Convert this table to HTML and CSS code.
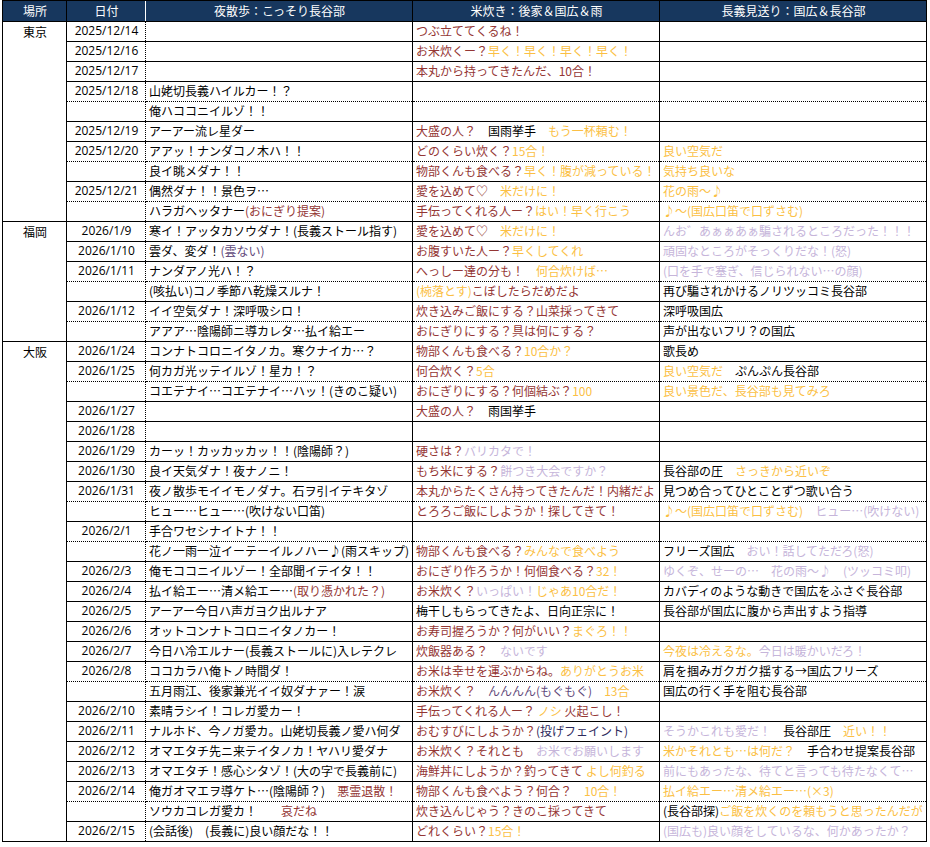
FILE: index.html
```html
<!DOCTYPE html>
<html lang="ja">
<head>
<meta charset="utf-8">
<title>夜散歩</title>
<link rel="stylesheet" href="styles.css">
</head>
<body>
<table class="sheet">
<colgroup><col class="w1"><col class="w2"><col class="w3"><col class="w4"><col class="w5"></colgroup>
<thead>
<tr class="hd"><th class="c1">場所</th><th class="c2">日付</th><th class="c3">夜散歩：こっそり長谷部</th><th class="c4">米炊き：後家＆国広＆雨</th><th class="c5">長義見送り：国広＆長谷部</th></tr>
</thead>
<tbody>
<tr><td class="c1" rowspan="10">東京</td><td class="c2">2025/12/14</td><td class="c3"></td><td class="c4"><span class="m">つぶ立ててくるね！</span></td><td class="c5"></td></tr>
<tr><td class="c2">2025/12/16</td><td class="c3"></td><td class="c4"><span class="m">お米炊くー？</span><span class="y">早く！早く！早く！早く！</span></td><td class="c5"></td></tr>
<tr><td class="c2">2025/12/17</td><td class="c3"></td><td class="c4"><span class="m">本丸から持ってきたんだ、10合！</span></td><td class="c5"></td></tr>
<tr class="dt"><td class="c2">2025/12/18</td><td class="c3">山姥切長義ハイルカー！？</td><td class="c4"></td><td class="c5"></td></tr>
<tr class="dc"><td class="c2"></td><td class="c3">俺ハココニイルゾ！！</td><td class="c4"></td><td class="c5"></td></tr>
<tr><td class="c2">2025/12/19</td><td class="c3">アーアー流レ星ダー</td><td class="c4"><span class="m">大盛の人？</span>　国雨挙手　<span class="y">もう一杯頼む！</span></td><td class="c5"></td></tr>
<tr class="dt"><td class="c2">2025/12/20</td><td class="c3">アアッ！ナンダコノ木ハ！！</td><td class="c4"><span class="m">どのくらい炊く？</span><span class="y">15合！</span></td><td class="c5"><span class="y">良い空気だ</span></td></tr>
<tr class="dc"><td class="c2"></td><td class="c3">良イ眺メダナ！！</td><td class="c4"><span class="m">物部くんも食べる？</span><span class="y">早く！腹が減っている！</span></td><td class="c5"><span class="y">気持ち良いな</span></td></tr>
<tr class="dt"><td class="c2">2025/12/21</td><td class="c3">偶然ダナ！！景色ヲ…</td><td class="c4"><span class="m">愛を込めて♡</span>　<span class="y">米だけに！</span></td><td class="c5"><span class="y">花の雨〜♪</span></td></tr>
<tr class="dc"><td class="c2"></td><td class="c3">ハラガヘッタナー<span class="m">(おにぎり提案)</span></td><td class="c4"><span class="m">手伝ってくれる人ー？</span><span class="y">はい！早く行こう</span></td><td class="c5"><span class="y">♪〜(国広口笛で口ずさむ)</span></td></tr>

<tr><td class="c1" rowspan="6">福岡</td><td class="c2">2026/1/9</td><td class="c3">寒イ！アッタカソウダナ！(長義ストール指す)</td><td class="c4"><span class="m">愛を込めて♡</span>　<span class="y">米だけに！</span></td><td class="c5"><span class="p">んお゛あぁぁあぁ騙されるところだった！！！</span></td></tr>
<tr><td class="c2">2026/1/10</td><td class="c3">雲ダ、変ダ！<span class="dp">(雲ない)</span></td><td class="c4"><span class="m">お腹すいた人ー？</span><span class="y">早くしてくれ</span></td><td class="c5"><span class="p">頑固なところがそっくりだな！(怒)</span></td></tr>
<tr class="dt"><td class="c2">2026/1/11</td><td class="c3">ナンダアノ光ハ！？</td><td class="c4"><span class="m">へっしー達の分も！</span>　<span class="y">何合炊けば…</span></td><td class="c5"><span class="p">(口を手で塞ぎ、信じられない…の顔)</span></td></tr>
<tr class="dc"><td class="c2"></td><td class="c3">(咳払い)コノ季節ハ乾燥スルナ！</td><td class="c4"><span class="y">(椀落とす)</span><span class="m">こぼしたらだめだよ</span></td><td class="c5">再び騙されかけるノリツッコミ長谷部</td></tr>
<tr class="dt"><td class="c2">2026/1/12</td><td class="c3">イイ空気ダナ！深呼吸シロ！</td><td class="c4"><span class="m">炊き込みご飯にする？山菜採ってきて</span></td><td class="c5">深呼吸国広</td></tr>
<tr class="dc"><td class="c2"></td><td class="c3">アアア…陰陽師ニ導カレタ…払イ給エー</td><td class="c4"><span class="m">おにぎりにする？具は何にする？</span></td><td class="c5">声が出ないフリ？の国広</td></tr>

<tr><td class="c1" rowspan="25">大阪</td><td class="c2">2026/1/24</td><td class="c3">コンナトコロニイタノカ。寒クナイカ…？</td><td class="c4"><span class="m">物部くんも食べる？</span><span class="y">10合か？</span></td><td class="c5">歌長め</td></tr>
<tr class="dt"><td class="c2">2026/1/25</td><td class="c3">何カガ光ッテイルゾ！星カ！？</td><td class="c4"><span class="m">何合炊く？</span><span class="y">5合</span></td><td class="c5"><span class="y">良い空気だ</span>　ぷんぷん長谷部</td></tr>
<tr class="dc"><td class="c2"></td><td class="c3">コエテナイ…コエテナイ…ハッ！(きのこ疑い)</td><td class="c4"><span class="m">おにぎりにする？何個結ぶ？</span><span class="y">100</span></td><td class="c5"><span class="y">良い景色だ、長谷部も見てみろ</span></td></tr>
<tr><td class="c2">2026/1/27</td><td class="c3"></td><td class="c4"><span class="m">大盛の人？</span>　雨国挙手</td><td class="c5"></td></tr>
<tr><td class="c2">2026/1/28</td><td class="c3"></td><td class="c4"></td><td class="c5"></td></tr>
<tr><td class="c2">2026/1/29</td><td class="c3">カーッ！カッカッカッ！！(陰陽師？)</td><td class="c4"><span class="m">硬さは？</span><span class="p">バリカタで！</span></td><td class="c5"></td></tr>
<tr><td class="c2">2026/1/30</td><td class="c3">良イ天気ダナ！夜ナノニ！</td><td class="c4"><span class="m">もち米にする？</span><span class="p">餅つき大会ですか？</span></td><td class="c5">長谷部の圧　<span class="y">さっきから近いぞ</span></td></tr>
<tr class="dt"><td class="c2">2026/1/31</td><td class="c3">夜ノ散歩モイイモノダナ。石ヲ引イテキタゾ</td><td class="c4"><span class="m">本丸からたくさん持ってきたんだ！内緒だよ</span></td><td class="c5">見つめ合ってひとことずつ歌い合う</td></tr>
<tr class="dc"><td class="c2"></td><td class="c3">ヒュー…ヒュー…(吹けない口笛)</td><td class="c4"><span class="m">とろろご飯にしようか！探してきて！</span></td><td class="c5"><span class="y">♪〜(国広口笛で口ずさむ)</span>　<span class="p">ヒュー…(吹けない)</span></td></tr>
<tr class="dt"><td class="c2">2026/2/1</td><td class="c3">手合ワセシナイトナ！！</td><td class="c4"></td><td class="c5"></td></tr>
<tr class="dc"><td class="c2"></td><td class="c3">花ノ一雨一泣イーテーイルノハー♪(雨スキップ)</td><td class="c4"><span class="m">物部くんも食べる？</span><span class="y">みんなで食べよう</span></td><td class="c5">フリーズ国広　<span class="p">おい！話してただろ(怒)</span></td></tr>
<tr><td class="c2">2026/2/3</td><td class="c3">俺モココニイルゾー！全部聞イテイタ！！</td><td class="c4"><span class="m">おにぎり作ろうか！何個食べる？</span><span class="y">32！</span></td><td class="c5"><span class="p">ゆくぞ、せーの…　花の雨〜♪　(ツッコミ叩)</span></td></tr>
<tr><td class="c2">2026/2/4</td><td class="c3">払イ給エー…清メ給エー…<span class="m">(取り憑かれた？)</span></td><td class="c4"><span class="m">お米炊く？</span><span class="p">いっぱい！</span><span class="y">じゃあ10合だ！</span></td><td class="c5">カバディのような動きで国広をふさぐ長谷部</td></tr>
<tr><td class="c2">2026/2/5</td><td class="c3">アーアー今日ハ声ガヨク出ルナア</td><td class="c4">梅干しもらってきたよ、日向正宗に！</td><td class="c5">長谷部が国広に腹から声出すよう指導</td></tr>
<tr><td class="c2">2026/2/6</td><td class="c3">オットコンナトコロニイタノカー！</td><td class="c4"><span class="m">お寿司握ろうか？何がいい？</span><span class="y">まぐろ！！</span></td><td class="c5"></td></tr>
<tr><td class="c2">2026/2/7</td><td class="c3">今日ハ冷エルナー(長義ストールに)入レテクレ</td><td class="c4"><span class="m">炊飯器ある？</span>　<span class="p">ないです</span></td><td class="c5"><span class="y">今夜は冷えるな。</span><span class="p">今日は暖かいだろ！</span></td></tr>
<tr class="dt"><td class="c2">2026/2/8</td><td class="c3">ココカラハ俺トノ時間ダ！</td><td class="c4"><span class="m">お米は幸せを運ぶからね。</span><span class="y">ありがとうお米</span></td><td class="c5">肩を掴みガクガク揺する→国広フリーズ</td></tr>
<tr class="dc"><td class="c2"></td><td class="c3">五月雨江、後家兼光イイ奴ダナァー！涙</td><td class="c4"><span class="m">お米炊く？</span>　<span class="dp">んんんん(もぐもぐ)</span>　<span class="y">13合</span></td><td class="c5">国広の行く手を阻む長谷部</td></tr>
<tr><td class="c2">2026/2/10</td><td class="c3">素晴ラシイ！コレガ愛カー！</td><td class="c4"><span class="m">手伝ってくれる人ー？</span> <span class="y">ノシ</span> <span class="m">火起こし！</span></td><td class="c5"></td></tr>
<tr><td class="c2">2026/2/11</td><td class="c3">ナルホド、今ノガ愛カ。山姥切長義ノ愛ハ何ダ</td><td class="c4"><span class="m">おむすびにしようか？</span><span class="nv">(投げフェイント)</span></td><td class="c5"><span class="p">そうかこれも愛だ！</span>　長谷部圧　<span class="y">近い！！</span></td></tr>
<tr><td class="c2">2026/2/12</td><td class="c3">オマエタチ先ニ来テイタノカ！ヤハリ愛ダナ</td><td class="c4"><span class="m">お米炊く？それとも</span>　<span class="p">お米でお願いします</span></td><td class="c5"><span class="y">米かそれとも…は何だ？</span>　手合わせ提案長谷部</td></tr>
<tr><td class="c2">2026/2/13</td><td class="c3">オマエタチ！感心シタゾ！(大の字で長義前に)</td><td class="c4"><span class="m">海鮮丼にしようか？釣ってきて</span> <span class="y">よし何釣る</span></td><td class="c5"><span class="p">前にもあったな、待てと言っても待たなくて…</span></td></tr>
<tr class="dt"><td class="c2">2026/2/14</td><td class="c3">俺ガオマエヲ導ケト…(陰陽師？)　<span class="m">悪霊退散！</span></td><td class="c4"><span class="m">物部くんも食べよう？何合？</span>　<span class="y">10合！</span></td><td class="c5"><span class="y">払イ給エー…清メ給エー…(×3)</span></td></tr>
<tr class="dc"><td class="c2"></td><td class="c3">ソウカコレガ愛カ！　　<span class="m">哀だね</span></td><td class="c4"><span class="m">炊き込んじゃう？きのこ採ってきて</span></td><td class="c5">(長谷部探)<span class="y">ご飯を炊くのを頼もうと思ったんだが</span></td></tr>
<tr><td class="c2">2026/2/15</td><td class="c3">(会話後)　(長義に)良い顔だな！！</td><td class="c4"><span class="m">どれくらい？</span><span class="y">15合！</span></td><td class="c5"><span class="p">(国広も)良い顔をしているな、何かあったか？</span></td></tr>
</tbody>
</table>
</body>
</html>
```

FILE: styles.css
```css
html, body {
  margin: 0;
  padding: 0;
  background: #ffffff;
}

body {
  font-family: "Noto Sans CJK JP", "Noto Sans", sans-serif;
  font-size: 12px;
  color: #000000;
}

.sheet {
  border-collapse: collapse;
  table-layout: fixed;
  margin-left: 2px;
}

.w1 { width: 64px; }
.w2 { width: 79px; }
.w3 { width: 267px; }
.w4 { width: 247px; }
.w5 { width: 267px; }

.sheet td,
.sheet th {
  border: 1px solid #000000;
  padding: 0 2px 1px 3px;
  white-space: nowrap;
  overflow: hidden;
  line-height: 18px;
  vertical-align: bottom;
  text-align: left;
}

.sheet tbody tr {
  height: 20px;
}

.sheet .hd {
  height: 21px;
}

.sheet th {
  background: #17375e;
  color: #ffffff;
  font-weight: normal;
  text-align: center;
  vertical-align: middle;
}

.sheet .c1 {
  text-align: center;
  vertical-align: top;
  padding-top: 1px;
}

.sheet .c2 {
  text-align: center;
  border-right-style: dotted;
}

.sheet td.c2 {
  font-family: "Open Sans", "Noto Sans CJK JP", sans-serif;
}

.sheet .c3 {
  border-left-style: dotted;
}

.sheet th.c2 { border-right-color: #ffffff; }
.sheet th.c3 { border-left-color: #ffffff; }

.sheet .dt td {
  border-bottom-style: dotted;
}

.sheet .dc td {
  border-top-style: dotted;
}

.m { color: #943634; }
.y { color: #fbbf45; }
.p { color: #c6b5da; }
.dp { color: #5f497a; }
.nv { color: #2e2a5c; }
```
